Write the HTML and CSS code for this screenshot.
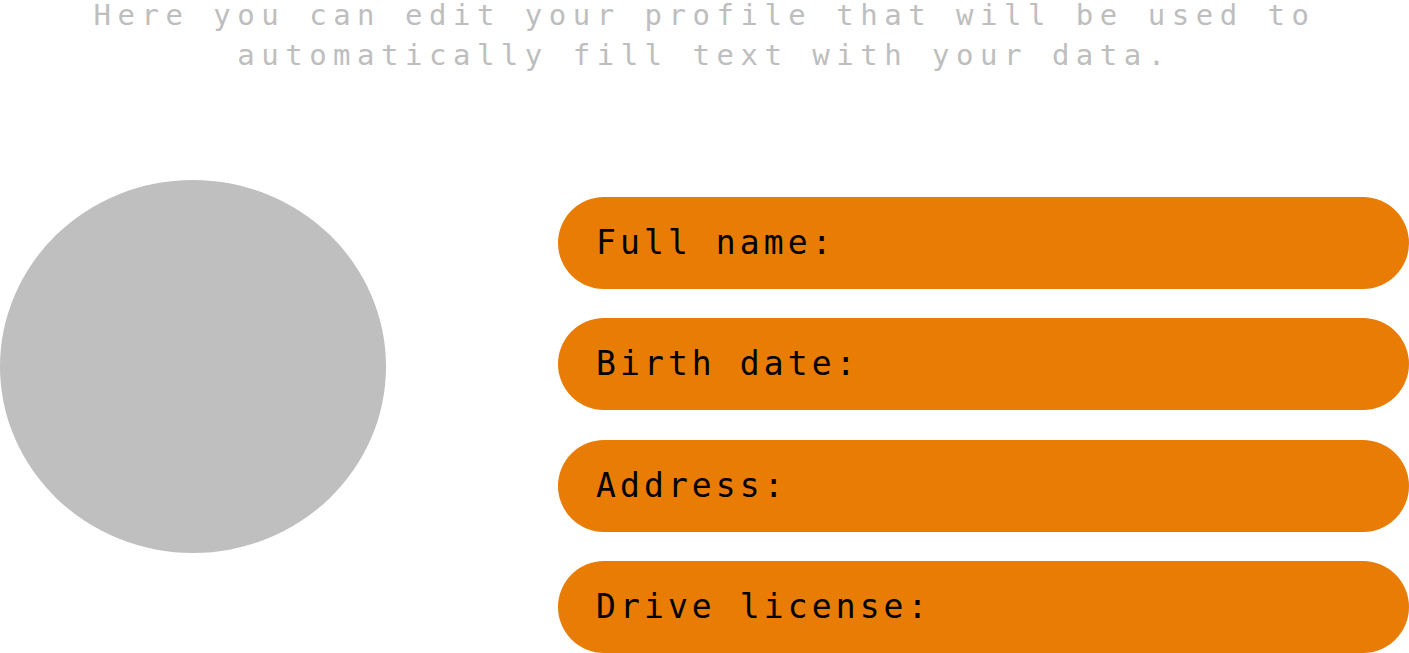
FILE: index.html
```html
<!DOCTYPE html>
<html lang="en">
<head>
<meta charset="utf-8">
<title>Profile</title>
<link rel="stylesheet" href="styles.css">
</head>
<body>
<header class="intro">
  <p class="intro-text">Here you can edit your profile that will be used to<br>automatically fill text with your data.</p>
</header>
<main class="profile">
  <div class="avatar"></div>
  <div class="fields">
    <div class="field">Full name:</div>
    <div class="field">Birth date:</div>
    <div class="field">Address:</div>
    <div class="field">Drive license:</div>
  </div>
</main>
</body>
</html>
```
FILE: styles.css
```css
html, body {
  margin: 0;
  padding: 0;
  background: #ffffff;
  overflow: hidden;
}
body {
  width: 1409px;
  height: 653px;
  font-family: "DejaVu Sans Mono", "Liberation Mono", monospace;
}
.intro {
  margin-top: -5px;
}
.intro-text {
  margin: 0;
  text-align: center;
  font-size: 29px;
  line-height: 40px;
  letter-spacing: 6.5px;
  color: #bebebe;
}
.profile {
  display: flex;
  align-items: flex-start;
  margin-top: 105px;
}
.avatar {
  flex: 0 0 auto;
  width: 386px;
  height: 373px;
  border-radius: 50%;
  background: #bfbfbf;
}
.fields {
  flex: 1;
  margin-left: 172px;
  margin-top: 17px;
  display: flex;
  flex-direction: column;
  gap: 29.4px;
}
.field {
  height: 92px;
  border-radius: 46px;
  background: #e87c04;
  color: #000000;
  display: flex;
  align-items: center;
  padding-left: 38px;
  padding-bottom: 1px;
  box-sizing: border-box;
  font-size: 33px;
  letter-spacing: 4.1px;
}
```
